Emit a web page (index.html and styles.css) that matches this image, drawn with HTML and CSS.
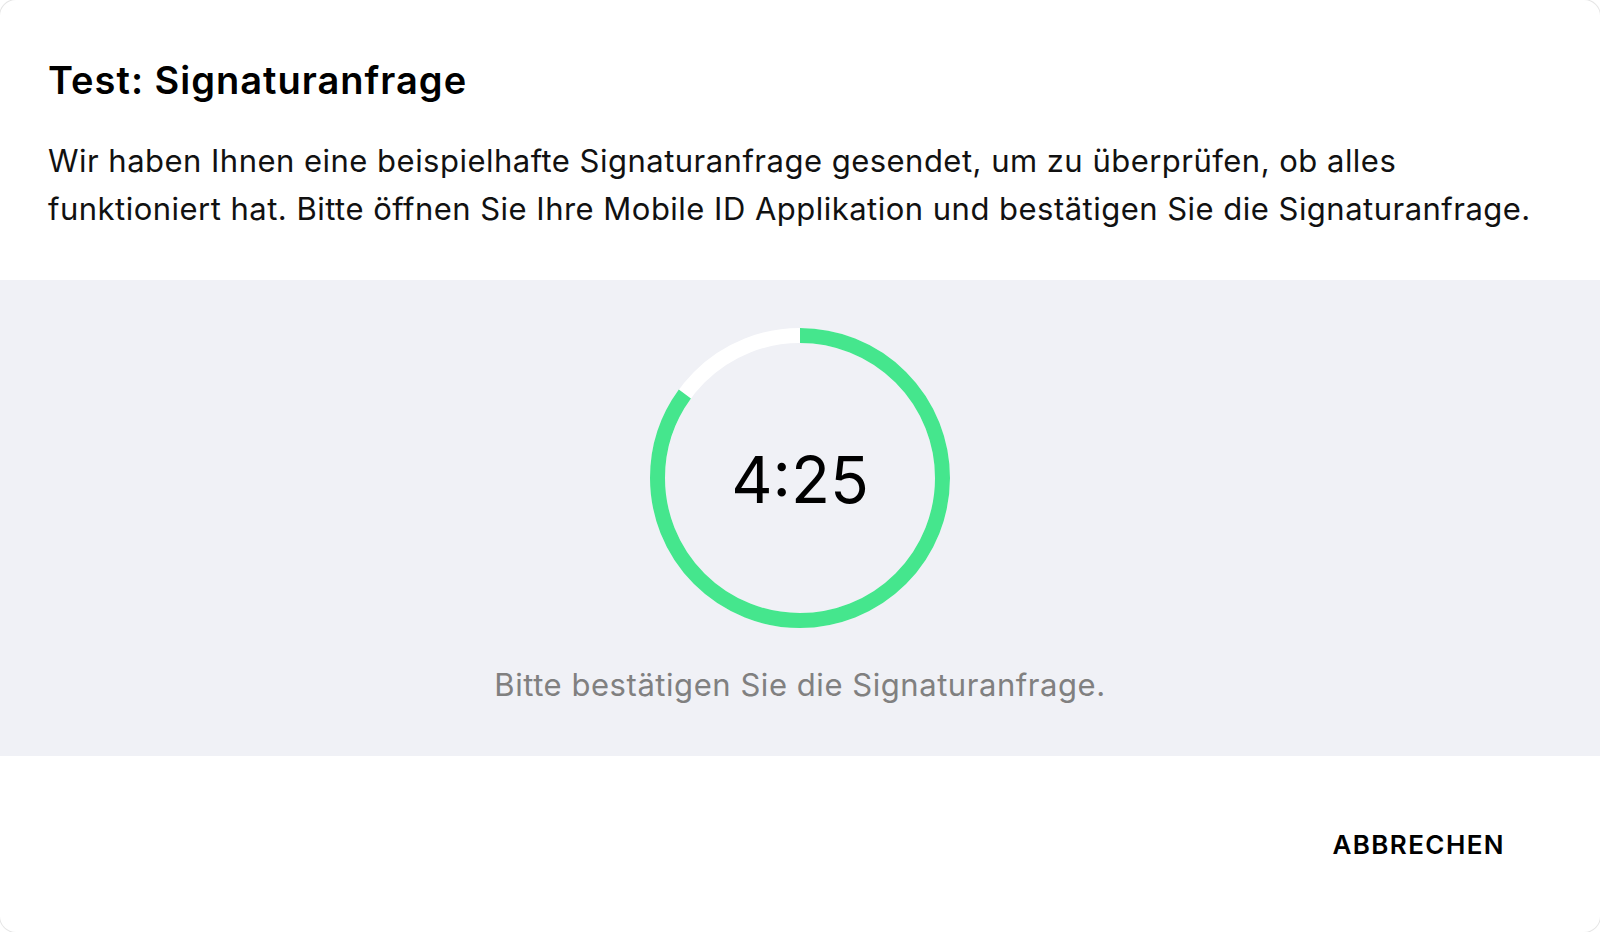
FILE: index.html
```html
<!DOCTYPE html>
<html lang="de">
<head>
<meta charset="utf-8">
<title>Test: Signaturanfrage</title>
<link rel="stylesheet" href="styles.css">
</head>
<body>
<div class="dialog">
  <header class="head">
    <h1 class="title">Test: Signaturanfrage</h1>
    <p class="desc">Wir haben Ihnen eine beispielhafte Signaturanfrage gesendet, um zu überprüfen, ob alles funktioniert hat. Bitte öffnen Sie Ihre Mobile ID Applikation und bestätigen Sie die Signaturanfrage.</p>
  </header>
  <section class="status">
    <div class="timer">
      <svg class="ring" width="300" height="300" viewBox="0 0 300 300">
        <circle cx="150" cy="150" r="142.5" fill="none" stroke="#ffffff" stroke-width="15"/>
        <circle cx="150" cy="150" r="142.5" fill="none" stroke="#45e68d" stroke-width="15" stroke-dasharray="761.05 895.35" transform="rotate(-90 150 150)"/>
      </svg>
      <span class="time">4:25</span>
    </div>
    <p class="caption">Bitte bestätigen Sie die Signaturanfrage.</p>
  </section>
  <footer class="actions">
    <button class="btn" type="button">ABBRECHEN</button>
  </footer>
</div>
</body>
</html>
```

FILE: styles.css
```css
* { box-sizing: border-box; }
html, body { margin: 0; padding: 0; background: #ffffff; }
body {
  font-family: Inter, "Noto Sans", "Liberation Sans", sans-serif;
  color: #111111;
  width: 1600px;
  height: 932px;
  overflow: hidden;
}
.dialog {
  width: 1600px;
  height: 932px;
  background: #ffffff;
  border-radius: 16px;
  box-shadow: 0 0 0 1px rgba(0,0,0,0.10);
  display: flex;
  flex-direction: column;
  overflow: hidden;
}
.head {
  height: 280px;
  padding: 57px 48px 0 48px;
}
.title {
  margin: 0;
  font-size: 38px;
  line-height: 46px;
  font-weight: 600;
  letter-spacing: 1px;
  color: #000000;
}
.desc {
  margin: 34px 0 0 0;
  font-size: 31px;
  line-height: 48px;
  font-weight: 400;
  letter-spacing: 0.48px;
  color: #111111;
}
.status {
  height: 476px;
  background: #f0f1f6;
  padding-top: 48px;
  display: flex;
  flex-direction: column;
  align-items: center;
}
.timer {
  width: 300px;
  height: 300px;
  display: grid;
  place-items: center;
}
.ring, .time { grid-area: 1 / 1; }
.ring { display: block; }
.time {
  font-size: 64px;
  line-height: 1;
  font-weight: 400;
  color: #000000;
  padding-top: 4px;
}
.caption {
  margin: 37px 0 0 0;
  font-size: 31px;
  line-height: 40px;
  letter-spacing: 0.55px;
  color: #808080;
}
.actions {
  flex: 1;
  display: flex;
  align-items: center;
  justify-content: flex-end;
  padding-right: 87px;
}
.btn {
  font-family: inherit;
  font-size: 26px;
  font-weight: 600;
  letter-spacing: 1.4px;
  color: #000000;
  background: none;
  border: 0;
  padding: 8px 8px;
  cursor: pointer;
}
```
